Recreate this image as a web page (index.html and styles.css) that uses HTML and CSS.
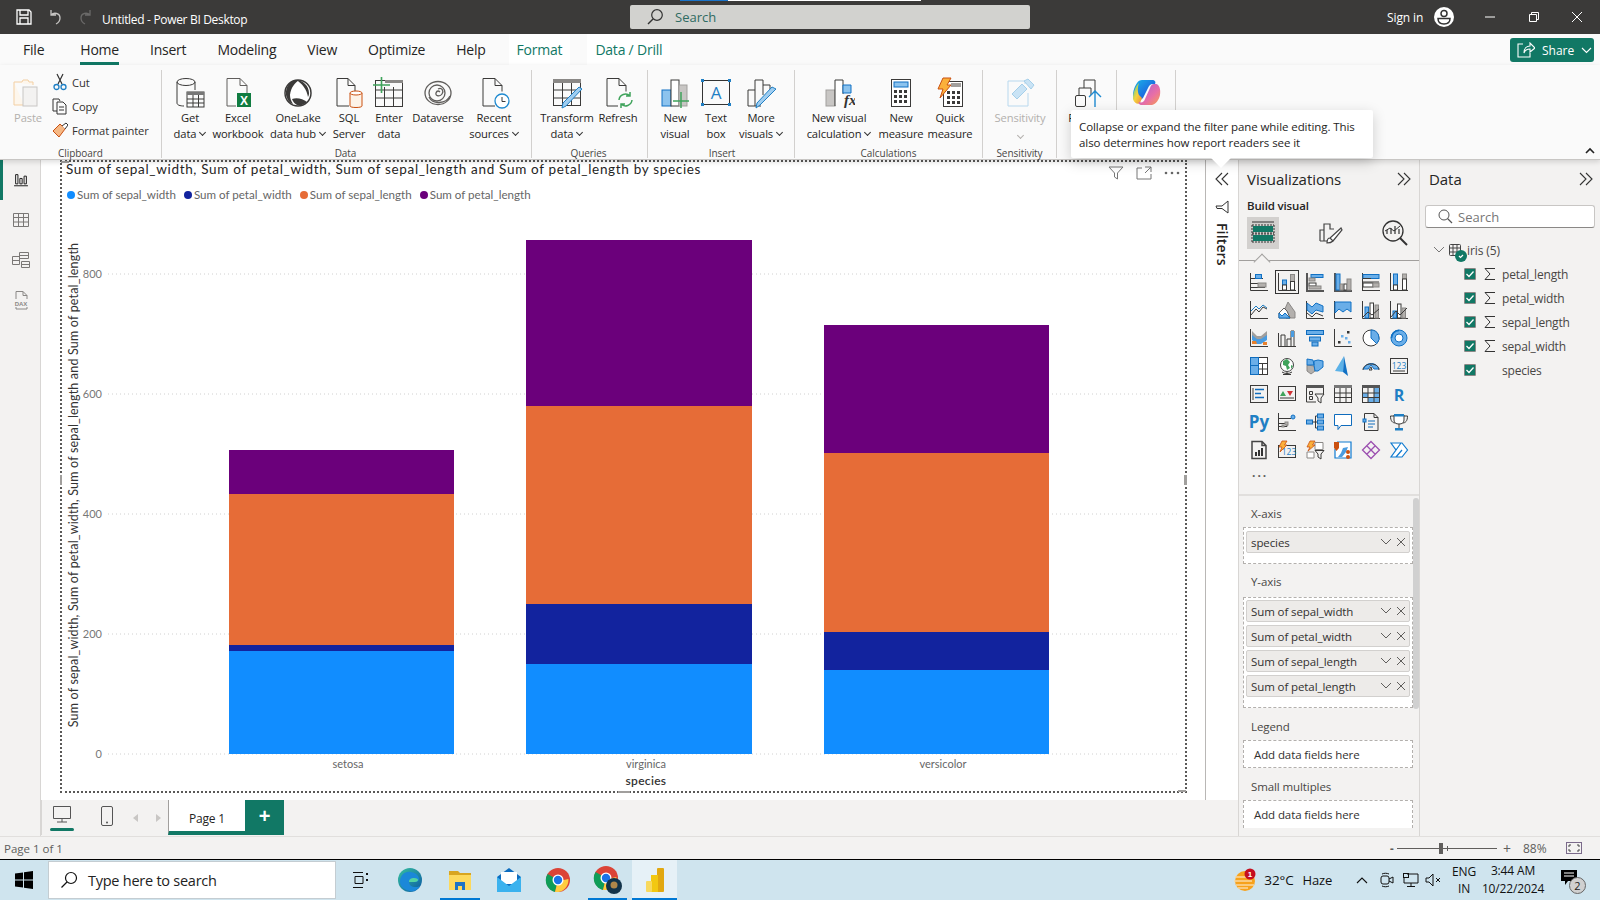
FILE: index.html
```html
<!DOCTYPE html>
<html lang="en">
<head>
<meta charset="utf-8">
<title>Untitled - Power BI Desktop</title>
<link rel="stylesheet" href="styles.css">
</head>
<body>
<div class="app">
  <header class="titlebar">
    <div class="tb-left">
      <svg class="tb-ic" width="18" height="18" viewBox="0 0 18 18"><path d="M2 2h12l2 2v12H2zM5 2v5h8V2M5 16v-6h8v6" fill="none" stroke="#fff" stroke-width="1.3"/></svg>
      <svg class="tb-ic" width="18" height="18" viewBox="0 0 18 18"><path d="M5 2v5h5M5 7c3-3 9-2 9 3 0 3-2 5-4 6" fill="none" stroke="#c8c6c4" stroke-width="1.3"/></svg>
      <svg class="tb-ic" width="18" height="18" viewBox="0 0 18 18"><path d="M13 2v5H8M13 7c-3-3-9-2-9 3 0 3 2 5 4 6" fill="none" stroke="#6b6a69" stroke-width="1.3"/></svg>
      <span class="tb-title">Untitled - Power BI Desktop</span>
    </div>
    <div class="tb-search">
      <i class="tb-stripe"></i>
      <svg width="18" height="18" viewBox="0 0 18 18"><circle cx="11" cy="7" r="5.3" fill="none" stroke="#333" stroke-width="1.2"/><path d="M7 11l-5 5" stroke="#333" stroke-width="1.4"/></svg>
      <span>Search</span>
    </div>
    <div class="tb-right">
      <span class="signin">Sign in</span>
      <svg width="22" height="22" viewBox="0 0 22 22"><circle cx="11" cy="11" r="10" fill="#fff"/><circle cx="11" cy="7.5" r="3" fill="none" stroke="#333" stroke-width="1.5"/><path d="M5 12.5h12c0 4-3 5.5-6 5.5s-6-1.5-6-5.5z" fill="none" stroke="#333" stroke-width="1.5"/></svg>
      <svg class="win-min" width="12" height="12" viewBox="0 0 12 12"><path d="M1 6h10" stroke="#fff"/></svg>
      <svg class="win-max" width="12" height="12" viewBox="0 0 12 12"><path d="M1.5 3.5h7v7h-7zM3.5 3.5v-2h7v7h-2" fill="none" stroke="#fff"/></svg>
      <svg class="win-close" width="12" height="12" viewBox="0 0 12 12"><path d="M1 1l10 10M11 1L1 11" stroke="#fff"/></svg>
    </div>
  </header>

  <nav class="tabs">
    <span class="tab tab-file">File</span>
    <span class="tab tab-on">Home</span>
    <span class="tab">Insert</span>
    <span class="tab">Modeling</span>
    <span class="tab">View</span>
    <span class="tab">Optimize</span>
    <span class="tab">Help</span>
    <span class="tab tab-ctx">Format</span>
    <span class="tab tab-ctx">Data / Drill</span>
    <button class="share">
      <svg width="18" height="16" viewBox="0 0 18 16"><path d="M6 2H1v13h12v-4M7 11c0-5 3-7 6-7V1l5 5-5 4V7c-3 0-5 1-6 4z" fill="none" stroke="#fff" stroke-width="1.1"/></svg>
      <span>Share</span>
      <svg width="11" height="7" viewBox="0 0 11 7"><path d="M1 1l4.500 4.500L10 1" fill="none" stroke="#fff" stroke-width="1.1"/></svg>
    </button>
  </nav>

  <section class="ribbon">
    <div class="group g-clip">
      <div class="items">
        <div class="item it-paste">
          <svg width="32" height="32" viewBox="0 0 32 32"><path d="M2 5h8l1-2h5l1 2h4v3M2 5v23h10" fill="#fdf6ec" stroke="#f3cfa3"/><rect x="11" y="10" width="14" height="19" fill="#f3f2f1" stroke="#c8c6c4"/></svg>
          <span class="lbl dim">Paste</span>
        </div>
        <div class="small-col">
          <div class="small"><svg width="16" height="18" viewBox="0 0 16 18"><path d="M5 1l5 10M11 1L6 11" stroke="#333" stroke-width="1.2"/><circle cx="4.5" cy="14" r="2.5" fill="none" stroke="#1f7fc4" stroke-width="1.3"/><circle cx="11.5" cy="14" r="2.5" fill="none" stroke="#1f7fc4" stroke-width="1.3"/></svg><span>Cut</span></div>
          <div class="small"><svg width="16" height="18" viewBox="0 0 16 18"><path d="M5 14H1V2h6l1 2M5 5h6l3 3v9H5z" fill="#fafafa" stroke="#333"/><path d="M7 10h5M7 13h5" stroke="#333"/></svg><span>Copy</span></div>
          <div class="small"><svg width="16" height="18" viewBox="0 0 16 18"><path d="M1 10l7-7 5 5-6 8z" fill="#f5b885" stroke="#ca5010"/><path d="M10 5l4-3 2 2-3 4" fill="#fff" stroke="#333"/></svg><span>Format painter</span></div>
        </div>
      </div>
      <div class="glabel">Clipboard</div>
    </div>

    <div class="group g-data">
      <div class="items">
        <div class="item w44">
          <svg width="32" height="32" viewBox="0 0 32 32"><path d="M3 5v21c0 2 3 3 7 3M21 5v8" fill="none" stroke="#3b3a39"/><ellipse cx="12" cy="5" rx="9" ry="3.5" fill="none" stroke="#3b3a39"/><rect x="13" y="15" width="17" height="15" fill="#fafafa" stroke="#3b3a39"/><rect x="13" y="15" width="17" height="3" fill="#777"/><path d="M19 18v12M24.500 18v12M13 22h17M13 26h17" stroke="#3b3a39"/></svg>
          <span class="lbl">Get<br>data<i class="car"></i></span>
        </div>
        <div class="item w52">
          <svg width="32" height="32" viewBox="0 0 32 32"><path d="M5 1.500h13l7 7V16M5 1.500V29h9M18 1.500v7h7" fill="none" stroke="#605e5c"/><rect x="15" y="16" width="14" height="14" fill="#107c41"/><text x="22" y="27.500" class="xl">X</text></svg>
          <span class="lbl">Excel<br>workbook</span>
        </div>
        <div class="item w68">
          <svg width="32" height="32" viewBox="0 0 32 32"><circle cx="16" cy="16" r="13" fill="#fff" stroke="#3b3a39" stroke-width="1.5"/><path d="M4 18C3 8 10 2 17 3c-4 3-8 7-9 15 0 3 1 6 3 9-4-1-6-5-7-9z" fill="#3b3a39"/><path d="M14 3c7 0 13 6 13 13 0 1 0 2-1 4-1-7-6-14-12-17z" fill="#3b3a39"/><path d="M10 22c5-2 11 0 15 3-3 3-7 4-10 3-2-1-4-3-5-6z" fill="#3b3a39"/></svg>
          <span class="lbl">OneLake<br>data hub<i class="car"></i></span>
        </div>
        <div class="item w34">
          <svg width="32" height="32" viewBox="0 0 32 32"><path d="M4 1.500h11l7 7V14M4 1.500V29h12M15 1.500v7h7" fill="none" stroke="#3b3a39"/><path d="M17 16v13c0 2 12 2 12 0V16" fill="#fdf3e8" stroke="#ca5010"/><ellipse cx="23" cy="16" rx="6" ry="2" fill="#fff" stroke="#ca5010"/></svg>
          <span class="lbl">SQL<br>Server</span>
        </div>
        <div class="item w46">
          <svg width="32" height="32" viewBox="0 0 32 32"><rect x="2.500" y="3.500" width="27" height="26" fill="none" stroke="#3b3a39"/><rect x="12" y="3" width="18" height="3" fill="#8a8886"/><path d="M11.500 10v20M20.500 10v20M3 13h27M3 21h27" stroke="#3b3a39"/><path d="M8.500 0v16M0 8h17" stroke="#3fa35b" stroke-width="1.600"/></svg>
          <span class="lbl">Enter<br>data</span>
        </div>
        <div class="item w52">
          <svg width="32" height="32" viewBox="0 0 32 32"><g fill="none" stroke="#605e5c" stroke-width="1.300"><ellipse cx="16" cy="16" rx="13" ry="11.500"/><circle cx="15" cy="16" r="8"/><path d="M16 12c4-2 6 2 4 5s-7 2-6-1 3-2 4-1M7 20c4 8 17 7 21-1"/></g></svg>
          <span class="lbl">Dataverse</span>
        </div>
        <div class="item w60">
          <svg width="32" height="32" viewBox="0 0 32 32"><path d="M5 1.500h12l7 7v6M5 1.500V29h12M17 1.500v7h7" fill="none" stroke="#3b3a39"/><circle cx="24" cy="24" r="7" fill="#fff" stroke="#1f8ad0" stroke-width="1.300"/><path d="M24 20v4.500h3.500" fill="none" stroke="#3b3a39"/></svg>
          <span class="lbl">Recent<br>sources<i class="car"></i></span>
        </div>
      </div>
      <div class="glabel">Data</div>
    </div>

    <div class="group g-query">
      <div class="items">
        <div class="item w58">
          <svg width="32" height="32" viewBox="0 0 32 32"><rect x="2.500" y="2.500" width="27" height="26" fill="none" stroke="#3b3a39"/><rect x="2" y="2" width="28" height="4" fill="#8a8886"/><path d="M11.500 6v23M20.500 6v23M3 13h27M3 21h27" stroke="#3b3a39"/><path d="M31 12l-16 17-4 2 1-5 16-16z" fill="#9fcdf0" stroke="#1f7fc4"/></svg>
          <span class="lbl">Transform<br>data<i class="car"></i></span>
        </div>
        <div class="item w44">
          <svg width="32" height="32" viewBox="0 0 32 32"><path d="M5 1.500h12l7 7v6M5 1.500V29h11M17 1.500v7h7" fill="none" stroke="#3b3a39"/><path d="M17 23a6.500 6.500 0 0 1 11-4M30 23a6.500 6.500 0 0 1-11 4M28 15v4h-4M19 31v-4h4" fill="none" stroke="#3fa35b" stroke-width="1.500"/></svg>
          <span class="lbl">Refresh</span>
        </div>
      </div>
      <div class="glabel">Queries</div>
    </div>

    <div class="group g-insert">
      <div class="items">
        <div class="item w42">
          <svg width="32" height="32" viewBox="0 0 32 32"><rect x="3" y="13" width="9" height="16" fill="#8cc3ee" stroke="#1171c4"/><rect x="12" y="3" width="8" height="26" fill="#fff" stroke="#3b3a39"/><rect x="20" y="8" width="8" height="21" fill="#c8c6c4" stroke="#a19f9d"/><path d="M22 15v16M14 24h16" stroke="#3fa35b" stroke-width="1.500"/></svg>
          <span class="lbl">New<br>visual</span>
        </div>
        <div class="item w40">
          <svg width="32" height="32" viewBox="0 0 32 32"><rect x="2.500" y="3.500" width="27" height="24" fill="#fafafa" stroke="#333"/><g fill="#1f7fc4"><rect x="1" y="2" width="3" height="3"/><rect x="28" y="2" width="3" height="3"/><rect x="1" y="26" width="3" height="3"/><rect x="28" y="26" width="3" height="3"/></g><text x="16" y="22" class="txa">A</text></svg>
          <span class="lbl">Text<br>box</span>
        </div>
        <div class="item w50">
          <svg width="32" height="32" viewBox="0 0 32 32"><path d="M3 29V13h7v16zM10 13V3h8v15M18 8h7v5" fill="none" stroke="#3b3a39"/><path d="M10 29h6" stroke="#3b3a39"/><path d="M31 12L15 28l-4 3 1-5 15-16z" fill="#9fcdf0" stroke="#1f7fc4"/></svg>
          <span class="lbl">More<br>visuals<i class="car"></i></span>
        </div>
      </div>
      <div class="glabel">Insert</div>
    </div>

    <div class="group g-calc">
      <div class="items">
        <div class="item w74">
          <svg width="32" height="32" viewBox="0 0 32 32"><rect x="3" y="13" width="9" height="16" fill="#c8c6c4" stroke="#a19f9d"/><path d="M12 29V3h8v14" fill="#fff" stroke="#3b3a39"/><path d="M20 8h8v8h-8z" fill="#8cc3ee" stroke="#1171c4"/><text x="21" y="28" class="fx">fx</text></svg>
          <span class="lbl">New visual<br>calculation<i class="car"></i></span>
        </div>
        <div class="item w50">
          <svg width="32" height="32" viewBox="0 0 32 32"><rect x="6.500" y="2.500" width="19" height="27" fill="#fff" stroke="#3b3a39"/><rect x="9" y="5" width="14" height="5" fill="#8cc3ee" stroke="#1171c4"/><g fill="#3b3a39"><rect x="9" y="13" width="3" height="3"/><rect x="14" y="13" width="3" height="3"/><rect x="19" y="13" width="3" height="3"/><rect x="9" y="18" width="3" height="3"/><rect x="14" y="18" width="3" height="3"/><rect x="19" y="18" width="3" height="3"/><rect x="9" y="23" width="3" height="3"/><rect x="14" y="23" width="3" height="3"/><rect x="19" y="23" width="3" height="3"/></g></svg>
          <span class="lbl">New<br>measure</span>
        </div>
        <div class="item w48">
          <svg width="32" height="32" viewBox="0 0 32 32"><rect x="9.500" y="4.500" width="19" height="25" fill="#fff" stroke="#3b3a39"/><rect x="17" y="6" width="10" height="4" fill="#a19f9d"/><g fill="#3b3a39"><rect x="13" y="14" width="3" height="3"/><rect x="18" y="14" width="3" height="3"/><rect x="23" y="14" width="3" height="3"/><rect x="13" y="19" width="3" height="3"/><rect x="18" y="19" width="3" height="3"/><rect x="23" y="19" width="3" height="3"/><rect x="13" y="24" width="3" height="3"/><rect x="18" y="24" width="3" height="3"/><rect x="23" y="24" width="3" height="3"/></g><path d="M9 1h8l-4 7h4L6 21l3-9H4z" fill="#fbb03b" stroke="#ca5010"/></svg>
          <span class="lbl">Quick<br>measure</span>
        </div>
      </div>
      <div class="glabel">Calculations</div>
    </div>

    <div class="group g-sens">
      <div class="items">
        <div class="item w74">
          <svg width="32" height="32" viewBox="0 0 32 32"><path d="M4 4h17v3M4 4v25h20V16" fill="none" stroke="#b8d8ee"/><path d="M8 17L18 7l5 5-10 10zM20 4l4-2 6 6-3 4z" fill="#c9e3f5" stroke="#a6cfe9"/></svg>
          <span class="lbl dim">Sensitivity<br><i class="car dimcar"></i></span>
        </div>
      </div>
      <div class="glabel">Sensitivity</div>
    </div>

    <div class="group g-pub">
      <div class="items">
        <div class="item w60">
          <svg class="ic-pub" width="32" height="32" viewBox="0 0 32 32"><rect x="2.500" y="18.500" width="10" height="11" rx="1.500" fill="#fafafa" stroke="#3b3a39"/><path d="M6 18v-7h12v7M11 11V3h11v12" fill="none" stroke="#3b3a39"/><path d="M22 30V14M16 20l6-6 6 6" fill="none" stroke="#1f8ad0" stroke-width="1.400"/></svg>
          <span class="lbl">Publish</span>
        </div>
      </div>
    </div>

    <div class="group g-cop">
      <div class="items">
        <div class="item w58">
          <svg width="32" height="32" viewBox="0 0 32 32"><defs><linearGradient id="cp1" x1="0" y1="0" x2="1" y2="1"><stop offset="0" stop-color="#19b5e8"/><stop offset=".6" stop-color="#1b6fe0"/><stop offset="1" stop-color="#3a4fd6"/></linearGradient><linearGradient id="cp2" x1="0" y1="0" x2="1" y2="1"><stop offset="0" stop-color="#a35fd8"/><stop offset=".6" stop-color="#e86fa6"/><stop offset="1" stop-color="#f9a04d"/></linearGradient><linearGradient id="cp3" x1="0" y1="0" x2="1" y2="1"><stop offset="0" stop-color="#3fd0a0"/><stop offset=".5" stop-color="#f5d33f"/><stop offset="1" stop-color="#f08a3c"/></linearGradient></defs><path d="M12 3h10c3 0 4 2 3 4l-2 0c-3 0-4 2-5 4l-5 10c-2 3-8 2-9 0-2-4 0-11 3-15 1-2 3-3 5-3z" fill="url(#cp1)"/><path d="M3 22c0-6 2-12 6-16-1 3-2 8 0 12l3 3-2 5c-2 2-6 0-7-4z" fill="url(#cp3)"/><path d="M24 7h2c3 0 5 5 4 11-1 5-4 9-8 10H12c-3 0-4-2-3-3 3 1 5 0 6-3l5-11c1-3 2-4 4-4z" fill="url(#cp2)"/></svg>
        </div>
      </div>
    </div>
    <svg class="rb-collapse" width="10" height="7" viewBox="0 0 10 7"><path d="M1 6l4-4 4 4" fill="none" stroke="#222" stroke-width="1.600"/></svg>
  </section>

  <main class="main">
    <aside class="rail">
      <span class="rail-on"></span>
      <svg width="20" height="20" viewBox="-3 -3 26 26"><path d="M1 17.500h18" stroke="#222" stroke-width="1.300"/><path d="M3 15V3h3v12zM8.500 15V8h3v7zM14 15V5h3v10z" fill="none" stroke="#222" stroke-width="1.300"/></svg>
      <svg width="20" height="20" viewBox="0 0 20 20"><path d="M2.500 3.500h15v13h-15zM2.500 7.500h15M2.500 12h15M7.500 3.500v13M12.500 3.500v13" fill="none" stroke="#7a7876"/></svg>
      <svg width="20" height="20" viewBox="0 0 20 20"><path d="M1.500 6.500h7v8h-7zM1.500 10.500h7M8.500 2.500h9v6h-9zM8.500 5.500h9M10.500 11.500h8v6h-8zM10.500 14.500h8" fill="none" stroke="#7a7876"/></svg>
      <svg width="20" height="20" viewBox="0 0 20 20"><path d="M5 9V1.500h7l4 4V9M12 1.500v4h4M5 17v2h11v-2" fill="none" stroke="#8a8886"/><text x="10" y="15.500" class="dax">DAX</text></svg>
    </aside>

    <div class="work">
      <div class="work-top">
        <div class="canvas">
          <div class="visual">
            <i class="hdl hdl-tl"></i><i class="hdl hdl-l"></i><i class="hdl hdl-r"></i><i class="hdl hdl-t"></i><i class="hdl hdl-b"></i><i class="hdl hdl-br"></i>
            <div class="v-title">Sum of sepal_width, Sum of petal_width, Sum of sepal_length and Sum of petal_length by species</div>
            <div class="v-tools">
              <svg width="16" height="14" viewBox="0 0 16 14"><path d="M1 1h14L9.500 7v6L6.500 11V7z" fill="none" stroke="#777"/></svg>
              <svg width="16" height="14" viewBox="0 0 16 14"><path d="M6 2H1v11h14V8M9 1h6v5M15 1L9 7" fill="none" stroke="#777"/></svg>
              <svg width="16" height="14" viewBox="0 0 16 14"><g fill="#666"><circle cx="2" cy="7" r="1.300"/><circle cx="8" cy="7" r="1.300"/><circle cx="14" cy="7" r="1.300"/></g></svg>
            </div>
            <div class="legend">
              <span class="lg"><i class="dot c1"></i>Sum of sepal_width</span>
              <span class="lg"><i class="dot c2"></i>Sum of petal_width</span>
              <span class="lg"><i class="dot c3"></i>Sum of sepal_length</span>
              <span class="lg"><i class="dot c4"></i>Sum of petal_length</span>
            </div>
            <svg class="plot" width="1124" height="586" viewBox="61 205 1124 586">
              <g class="grid"><path d="M108 274H1180M108 394H1180M108 514H1180M108 634H1180M108 754H1180"/></g>
              <g class="ylab"><text x="102" y="278">800</text><text x="102" y="398">600</text><text x="102" y="518">400</text><text x="102" y="638">200</text><text x="102" y="758">0</text></g>
              <rect class="c1f" x="229" y="651" width="225" height="103"/><rect class="c2f" x="229" y="645" width="225" height="6"/><rect class="c3f" x="229" y="494" width="225" height="151"/><rect class="c4f" x="229" y="450" width="225" height="44"/>
              <rect class="c1f" x="526" y="664" width="226" height="90"/><rect class="c2f" x="526" y="604" width="226" height="60"/><rect class="c3f" x="526" y="406" width="226" height="198"/><rect class="c4f" x="526" y="240" width="226" height="166"/>
              <rect class="c1f" x="824" y="670" width="225" height="84"/><rect class="c2f" x="824" y="632" width="225" height="38"/><rect class="c3f" x="824" y="453" width="225" height="179"/><rect class="c4f" x="824" y="325" width="225" height="128"/>
              <g class="xlab"><text x="348" y="768">setosa</text><text x="646" y="768">virginica</text><text x="943" y="768">versicolor</text></g>
              <text class="xtitle" x="646" y="785">species</text>
              <text class="ytitle" transform="translate(78 485) rotate(-90)">Sum of sepal_width, Sum of petal_width, Sum of sepal_length and Sum of petal_length</text>
            </svg>
          </div>
        </div>
        <div class="filters">
          <svg width="14" height="14" viewBox="0 0 14 14"><path d="M7 1L1 7l6 6M13 1L7 7l6 6" fill="none" stroke="#333" stroke-width="1.100"/></svg>
          <svg class="f-ic" width="14" height="14" viewBox="0 0 14 14"><path d="M13 1v12L7 8.500H2L1 6h6z" fill="none" stroke="#333"/></svg>
          <span class="f-text">Filters</span>
        </div>
      </div>
      <div class="pagebar">
        <div class="pb-view">
          <svg width="20" height="20" viewBox="0 0 20 20"><path d="M1.500 2.500h17v12h-17zM10 15v3M5 18h10" fill="none" stroke="#555"/></svg>
          <i></i>
        </div>
        <svg class="pb-phone" width="14" height="22" viewBox="0 0 14 22"><rect x="1.500" y="1.500" width="11" height="19" rx="1.500" fill="none" stroke="#555"/><circle cx="7" cy="17.500" r="1" fill="#555"/></svg>
        <svg class="pb-arr" width="8" height="10" viewBox="0 0 8 10"><path d="M6 1v8L1 5z" fill="#c8c6c4"/></svg>
        <svg class="pb-arr2" width="8" height="10" viewBox="0 0 8 10"><path d="M2 1v8l5-4z" fill="#c8c6c4"/></svg>
        <div class="page-tab">Page 1</div>
        <div class="page-add">+</div>
      </div>
    </div>

    <section class="viz">
      <div class="pane-head"><span>Visualizations</span><svg width="14" height="14" viewBox="0 0 14 14"><path d="M1 1l6 6-6 6M7 1l6 6-6 6" fill="none" stroke="#333" stroke-width="1.100"/></svg></div>
      <div class="build">Build visual</div>
      <div class="build-tabs">
        <div class="bt bt-on"><svg width="28" height="24" viewBox="0 0 28 24"><path d="M3 1h22" stroke="#333"/><rect x="4" y="5" width="20" height="6" fill="#117865"/><rect x="4" y="14" width="20" height="6" fill="#117865"/><path d="M3 4h22M3 12h22M3 13h22M3 21h22M3 4v17M25 4v17" fill="none" stroke="#333" stroke-dasharray="2 1"/></svg></div>
        <div class="bt"><svg width="26" height="26" viewBox="0 0 26 26"><path d="M3 21V10h4V4h6v5h4M7 10v11M3 21h8" fill="none" stroke="#444" stroke-width="1.200"/><path d="M24 8L13 18l3 3L25 10zM13 18c-2 0-3 2-3 5 3 0 5-1 6-2" fill="#fff" stroke="#444" stroke-width="1.200"/></svg></div>
        <div class="bt"><svg width="26" height="26" viewBox="0 0 26 26"><circle cx="11" cy="11" r="10" fill="none" stroke="#333" stroke-width="1.300"/><path d="M5 14V10M9 14V8M13 14V6M17 14V9" stroke="#333" stroke-width="1.200"/><path d="M3 11l5-3 4 3 6-5" fill="none" stroke="#333"/><path d="M18 18l7 7" stroke="#333" stroke-width="2"/></svg></div>
      </div>
      <div class="notch-line"><i></i></div>

      <div class="vi-grid">
        <!-- row 1 -->
        <svg class="vi" viewBox="0 0 18 18"><path class="k" d="M.5 0v17.500H18M1 5.500h12M1 10.500h7M1 14.500h14"/><rect class="b" x="5.500" y="1.500" width="6" height="4"/><rect class="g" x="8" y="10" width="8" height="4"/></svg>
        <div class="vi-sel"><svg class="vi" viewBox="0 0 18 18"><path class="k" d="M.5 0v17.500H18"/><rect class="b" x="4.500" y="7" width="4" height="5"/><rect class="w" x="4.500" y="12" width="4" height="5"/><rect class="g" x="12.500" y="1.500" width="4" height="7"/><rect class="w" x="12.500" y="8.500" width="4" height="8.500"/></svg></div>
        <svg class="vi" viewBox="0 0 18 18"><path class="kk" d="M1 0v18h17"/><rect class="b" x="5" y="1.500" width="12" height="3"/><rect class="g" x="3" y="5" width="6" height="3"/><rect class="w" x="3" y="10" width="7" height="3"/><rect class="g" x="3" y="13" width="12" height="3"/></svg>
        <svg class="vi" viewBox="0 0 18 18"><path class="kk" d="M1 0v18h17"/><rect class="b" x="2" y="1" width="4" height="16"/><rect class="g" x="6" y="11" width="3" height="6"/><rect class="w" x="10" y="11" width="3" height="6"/><rect class="g" x="13" y="6" width="4" height="11"/></svg>
        <svg class="vi" viewBox="0 0 18 18"><path class="k" d="M.5 0v18M0 17.500h18"/><rect class="b" x="1" y="1.500" width="16" height="4"/><path class="k" d="M1 5.500h8M1 9h16"/><rect class="w" x="1" y="10" width="10" height="4"/><rect class="g" x="11" y="10" width="6" height="4"/></svg>
        <svg class="vi" viewBox="0 0 18 18"><path class="k" d="M.5 18V0M0 17.500h18"/><rect class="b" x="3.500" y="1" width="4" height="11"/><rect class="w" x="3.500" y="12" width="4" height="5"/><rect class="g" x="12.500" y="1" width="4" height="5"/><rect class="w" x="12.500" y="6" width="4" height="11"/></svg>
        <!-- row 2 -->
        <svg class="vi" viewBox="0 0 18 18"><path class="k" d="M.5 0v17.500H18M1 14l5-6 3 3 4-5 4 2"/><path class="s" d="M1 10l5-5 3 3 4-4 4 3"/></svg>
        <svg class="vi" viewBox="0 0 18 18"><path class="g" d="M6 10l4-9 7 10v6H8z"/><path class="w4" d="M1 12l5-5 3 3 3 7H1z"/><path class="b" d="M1 17v-5l3 3 3-3 5 5z"/></svg>
        <svg class="vi" viewBox="0 0 18 18"><path class="k" d="M.5 0v17.500H18"/><path class="b" d="M1 2l5 4 4-4 7 3v6l-7-2-4 4-5-4z"/><path class="k" d="M1 12l5 4 4-4 7 3"/></svg>
        <svg class="vi" viewBox="0 0 18 18"><path class="k" d="M.5 0v17.500H18"/><path class="b" d="M1 1h16v10l-4-3-4 3-4-3-4 4z"/></svg>
        <svg class="vi" viewBox="0 0 18 18"><path class="k" d="M.5 0v17.500H18"/><rect class="b" x="3" y="6" width="3.500" height="11"/><rect class="w" x="8" y="2" width="3.500" height="15"/><rect class="g" x="13" y="4" width="3.500" height="13"/><path class="k" d="M1 16l5-5 4 3 7-6"/></svg>
        <svg class="vi" viewBox="0 0 18 18"><path class="k" d="M.5 0v17.500H18"/><rect class="b" x="3" y="10" width="3.500" height="7"/><rect class="w" x="7.500" y="3" width="3.500" height="14"/><rect class="g" x="12" y="7" width="3.500" height="10"/><path class="k" d="M1 16l5-6 4 4 7-7"/></svg>
        <!-- row 3 -->
        <svg class="vi" viewBox="0 0 18 18"><path class="k" d="M.5 0v17.500H18"/><path class="fg" d="M2 2l5 5h4l6-5v5l-6 5H7L2 7z"/><path class="fb" d="M2 6l5 4h4l6-4v5l-6 4H7l-5-4z"/><path class="fo" d="M2 12h4l1 3H2zM13 13h4v3h-4z"/></svg>
        <svg class="vi" viewBox="0 0 18 18"><path class="k" d="M.5 4v13.500H18M3 17V6h4v11M9 17V10h4v7M13 10V2h3v15"/><path class="fb" d="M13 2h3v6h-3z"/></svg>
        <svg class="vi" viewBox="0 0 18 18"><rect class="fbs" x="0.500" y="1.500" width="17" height="4"/><rect class="fbs" x="3.500" y="8" width="11" height="4"/><rect class="fbs" x="6" y="13" width="6" height="4"/></svg>
        <svg class="vi" viewBox="0 0 18 18"><path class="k" d="M.5 0v17.500H18"/><g class="dk"><rect x="13" y="2" width="2.500" height="2.500"/><rect x="4" y="12" width="2.500" height="2.500"/></g><g class="lb"><rect x="7" y="6" width="2.500" height="2.500"/><rect x="11" y="8" width="2.500" height="2.500"/><rect x="14" y="12" width="2.500" height="2.500"/></g></svg>
        <svg class="vi" viewBox="0 0 18 18"><circle class="w2" cx="9" cy="9" r="8"/><path class="b" d="M9 1a8 8 0 0 1 5.700 13.700L9 9z"/></svg>
        <svg class="vi" viewBox="0 0 18 18"><circle class="b" cx="9" cy="9" r="8"/><circle class="dnh" cx="9" cy="9" r="4"/><path class="dn2" d="M1.500 9a7.500 7.500 0 0 1 7.500-7.500"/></svg>
        <!-- row 4 -->
        <svg class="vi" viewBox="0 0 18 18"><rect class="w" x=".5" y=".5" width="17" height="17"/><rect class="fbs" x=".5" y=".5" width="8" height="8"/><rect class="fbs" x=".5" y="8.500" width="8" height="9"/><path class="k" d="M9 6.500h8M12.500 6.500v11M9 12h8"/></svg>
        <svg class="vi" viewBox="0 0 18 18"><circle cx="9" cy="8" r="6.500" fill="#fff" stroke="#444"/><path d="M5 4l4-2 3 3-2 3 2 3-3 2-1-4-3-1zM13 8l2 1-2 3z" fill="#3fa35b"/><path class="k" d="M4 15c3 2 7 2 10 0M9 15v2M5 17.500h8"/></svg>
        <svg class="vi" viewBox="0 0 18 18"><path class="g" d="M1 8l7 1 1 5-4 3-4-3z"/><path class="b" d="M1 2l6 1 1 5-7 0zM8 4l4-1 5 1v6l-5 4-3 0-1-6z"/></svg>
        <svg class="vi" viewBox="0 0 18 18"><path d="M10 -1L1 14l8 1z" fill="#5cb2e8"/><path d="M10 -1l-1 16 5 4z" fill="#1171c4"/></svg>
        <svg class="vi" viewBox="0 0 18 18"><path class="b" d="M3 10C4 6 14 4 17 12h-5L9 8 6 12H1z"/><path class="k" d="M1 13c0-8 16-8 16 0M7 13l2-3 1 3z"/></svg>
        <svg class="vi" viewBox="0 0 18 18"><rect class="k" x=".5" y="1.500" width="17" height="15"/><path class="k" d="M3 14h12"/><text x="9" y="12" class="n123">123</text></svg>
        <!-- row 5 -->
        <svg class="vi" viewBox="0 0 18 18"><rect class="k" x=".5" y=".5" width="17" height="17"/><path class="k" d="M3 3v12"/><path class="bl" d="M5 4.500h9M5 8.500h6M5 12.500h9"/></svg>
        <svg class="vi" viewBox="0 0 18 18"><rect class="k" x=".5" y="1.500" width="17" height="14"/><path d="M2 11l3-5 3 5z" fill="#3fa35b"/><path d="M9 6h6l-3 5z" fill="#d13438"/><path class="k" d="M2 13h14"/></svg>
        <svg class="vi" viewBox="0 0 18 18"><path class="k" d="M10 17H.5V.5h17V10"/><rect x="0" y="0" width="18" height="3" fill="#555"/><path class="k" d="M3.500 6.500h3v3h-3zM3.500 11.500h3v3h-3z"/><path class="w3" d="M9 9h9l-3 4v5l-3-2v-3z"/></svg>
        <svg class="vi" viewBox="0 0 18 18"><rect class="k" x=".5" y=".5" width="17" height="17"/><rect x="0" y="0" width="18" height="3" fill="#777"/><path class="k" d="M6 3v14M12 3v14M1 8h16M1 12.500h16"/></svg>
        <svg class="vi" viewBox="0 0 18 18"><rect class="k" x=".5" y=".5" width="17" height="17"/><rect x="0" y="0" width="18" height="3" fill="#555"/><rect x="1" y="8" width="5" height="4" fill="#6aaee8"/><rect x="6" y="12" width="6" height="5" fill="#6aaee8"/><rect x="12" y="3" width="5" height="14" fill="#6aaee8"/><path class="k" d="M6 3v14M12 3v14M1 8h16M1 12.500h16"/></svg>
        <svg class="vi" viewBox="0 0 18 18"><text x="9" y="16" class="rt">R</text></svg>
        <!-- row 6 -->
        <svg class="vi" viewBox="0 0 18 18"><text x="9" y="15" class="py">Py</text></svg>
        <svg class="vi" viewBox="0 0 18 18"><path class="k" d="M.5 0v17.500H18M1 5.500h12M1 10.500h7M9 10.500v3h-8"/><circle class="b" cx="15" cy="4" r="2"/><rect class="g" x="7" y="9" width="3" height="3"/><rect class="g" x="4" y="12" width="2" height="2"/></svg>
        <svg class="vi" viewBox="0 0 18 18"><rect class="fbs" x=".5" y="7" width="6" height="4"/><path class="k" d="M6.500 9h3M9.500 3v12M9.500 3H11M9.500 9H11M9.500 15H11"/><rect class="fbs" x="11.500" y="1" width="6" height="4"/><rect class="fbs" x="11.500" y="7" width="6" height="4"/><rect class="fbs" x="11.500" y="13" width="6" height="4"/></svg>
        <svg class="vi" viewBox="0 0 18 18"><path class="sb" d="M.5 1.500h17v11H7l-3 4v-4H.5z"/></svg>
        <svg class="vi" viewBox="0 0 18 18"><path class="k" d="M2.500.5H12l4 4v13H2.500zM12 .5v4h4"/><rect class="b" x="1" y="6" width="3" height="3"/><path class="bl2" d="M6 8h7M6 11h7M6 14h5"/></svg>
        <svg class="vi" viewBox="0 0 18 18"><path class="k" d="M4 3H.5c0 5 2 7 5 7M14 3h3.500c0 5-2 7-5 7M9 11v4"/><path class="w2" d="M4 2h10v5c0 3-2 4-5 4s-5-1-5-4z"/><rect x="4" y="1" width="10" height="2.500" fill="#1f7fc4"/><rect x="5" y="15" width="8" height="2.500" fill="#1f7fc4"/></svg>
        <!-- row 7 -->
        <svg class="vi" viewBox="0 0 18 18"><path class="dkk" d="M2 .5h10l4 4v13H2zM12 .5v4h4"/><rect x="5" y="11" width="2" height="4" fill="#333"/><rect x="8" y="9" width="2" height="6" fill="#333"/><rect x="11" y="7" width="2" height="8" fill="#333"/></svg>
        <svg class="vi" viewBox="0 0 18 18"><rect class="k" x=".5" y="4.500" width="17" height="12"/><text x="11" y="14" class="n123s">123</text><path class="lt" d="M4 0h5L6.500 4H9L2 11l2-5H1z"/></svg>
        <svg class="vi" viewBox="0 0 18 18"><path class="g2" d="M9 1.500h8v7H9zM1 11h7v6H1z"/><path class="lt" d="M4 0h5L6.500 4H9L2 10l2-4H1z"/><path class="w3" d="M9 9.500h9l-3 3.500v5l-3-2v-3z"/></svg>
        <svg class="vi" viewBox="0 0 18 18"><path class="sb2" d="M3 1h14v16H1V8"/><path class="fb" d="M4 16l3-4 2-5 5-1-2 5-4 5z"/><path d="M0 1h5v6l-2.500 3L0 7z" fill="#ca5010"/><circle cx="14" cy="11" r="2" fill="#ca5010"/><circle cx="14" cy="16" r="2" fill="#ca5010"/></svg>
        <svg class="vi" viewBox="0 0 18 18"><path class="pa" d="M9 .5L17.500 9 9 17.500.5 9zM5 5l4 4 4-4M5 13l4-4 4 4"/></svg>
        <svg class="vi" viewBox="0 0 18 18"><path class="sb2" d="M1 2h11l5.500 7L12 16H1l5-7zM6 9l5-7M6 16l6-7"/></svg>
      </div>
      <div class="vi-more">...</div>
      <div class="vsep"></div>

      <div class="wells">
        <i class="scroll"></i>
        <div class="w-label">X-axis</div>
        <div class="well well-x">
          <div class="pill"><span>species</span><svg width="12" height="8" viewBox="0 0 12 8"><path d="M1 1l5 5 5-5" fill="none" stroke="#605e5c"/></svg><svg width="8" height="8" viewBox="0 0 8 8"><path d="M0 0l8 8M8 0L0 8" stroke="#605e5c"/></svg></div>
        </div>
        <div class="w-label w-y">Y-axis</div>
        <div class="well well-y">
          <div class="pill"><span>Sum of sepal_width</span><svg width="12" height="8" viewBox="0 0 12 8"><path d="M1 1l5 5 5-5" fill="none" stroke="#605e5c"/></svg><svg width="8" height="8" viewBox="0 0 8 8"><path d="M0 0l8 8M8 0L0 8" stroke="#605e5c"/></svg></div>
          <div class="pill"><span>Sum of petal_width</span><svg width="12" height="8" viewBox="0 0 12 8"><path d="M1 1l5 5 5-5" fill="none" stroke="#605e5c"/></svg><svg width="8" height="8" viewBox="0 0 8 8"><path d="M0 0l8 8M8 0L0 8" stroke="#605e5c"/></svg></div>
          <div class="pill"><span>Sum of sepal_length</span><svg width="12" height="8" viewBox="0 0 12 8"><path d="M1 1l5 5 5-5" fill="none" stroke="#605e5c"/></svg><svg width="8" height="8" viewBox="0 0 8 8"><path d="M0 0l8 8M8 0L0 8" stroke="#605e5c"/></svg></div>
          <div class="pill"><span>Sum of petal_length</span><svg width="12" height="8" viewBox="0 0 12 8"><path d="M1 1l5 5 5-5" fill="none" stroke="#605e5c"/></svg><svg width="8" height="8" viewBox="0 0 8 8"><path d="M0 0l8 8M8 0L0 8" stroke="#605e5c"/></svg></div>
        </div>
        <div class="w-label w-leg">Legend</div>
        <div class="well well-add">Add data fields here</div>
        <div class="w-label w-sm">Small multiples</div>
        <div class="well well-add well-last">Add data fields here</div>
      </div>
    </section>

    <section class="data">
      <div class="pane-head"><span>Data</span><svg width="14" height="14" viewBox="0 0 14 14"><path d="M1 1l6 6-6 6M7 1l6 6-6 6" fill="none" stroke="#333" stroke-width="1.100"/></svg></div>
      <div class="d-search">
        <svg width="15" height="15" viewBox="0 0 15 15"><circle cx="6" cy="6" r="5" fill="none" stroke="#555"/><path d="M9.500 9.500L14 14" stroke="#555" stroke-width="1.200"/></svg>
        <span>Search</span>
      </div>
      <div class="d-table">
        <svg class="d-chev" width="12" height="8" viewBox="0 0 12 8"><path d="M1 1l5 5 5-5" fill="none" stroke="#777"/></svg>
        <span class="d-tic">
          <svg width="12" height="12" viewBox="0 0 12 12"><rect x=".5" y=".5" width="11" height="11" rx="1" fill="none" stroke="#444"/><path d="M4 .5v11M8 .5v11M.5 4h11M.5 8h11" stroke="#444"/></svg>
          <i class="d-ok"><svg width="10" height="10" viewBox="0 0 10 10"><path d="M3 5l1.500 1.500L7 4" fill="none" stroke="#fff" stroke-width="1.200"/></svg></i>
        </span>
        <span class="d-name">iris (5)</span>
      </div>
      <div class="field"><i class="cb"><svg width="12" height="12" viewBox="0 0 12 12"><path d="M2.500 6l2.500 2.500L9.500 3.500" fill="none" stroke="#fff" stroke-width="1.300"/></svg></i><svg class="sig" width="18" height="14" viewBox="0 0 18 14"><path d="M11 1.500H1L6 7l-5 5.500h10" fill="none" stroke="#333"/></svg><span>petal_length</span></div>
      <div class="field"><i class="cb"><svg width="12" height="12" viewBox="0 0 12 12"><path d="M2.500 6l2.500 2.500L9.500 3.500" fill="none" stroke="#fff" stroke-width="1.300"/></svg></i><svg class="sig" width="18" height="14" viewBox="0 0 18 14"><path d="M11 1.500H1L6 7l-5 5.500h10" fill="none" stroke="#333"/></svg><span>petal_width</span></div>
      <div class="field"><i class="cb"><svg width="12" height="12" viewBox="0 0 12 12"><path d="M2.500 6l2.500 2.500L9.500 3.500" fill="none" stroke="#fff" stroke-width="1.300"/></svg></i><svg class="sig" width="18" height="14" viewBox="0 0 18 14"><path d="M11 1.500H1L6 7l-5 5.500h10" fill="none" stroke="#333"/></svg><span>sepal_length</span></div>
      <div class="field"><i class="cb"><svg width="12" height="12" viewBox="0 0 12 12"><path d="M2.500 6l2.500 2.500L9.500 3.500" fill="none" stroke="#fff" stroke-width="1.300"/></svg></i><svg class="sig" width="18" height="14" viewBox="0 0 18 14"><path d="M11 1.500H1L6 7l-5 5.500h10" fill="none" stroke="#333"/></svg><span>sepal_width</span></div>
      <div class="field"><i class="cb"><svg width="12" height="12" viewBox="0 0 12 12"><path d="M2.500 6l2.500 2.500L9.500 3.500" fill="none" stroke="#fff" stroke-width="1.300"/></svg></i><span class="sig-gap"></span><span>species</span></div>
    </section>
  </main>

  <footer class="status">
    <span class="st-page">Page 1 of 1</span>
    <div class="zoomer">
      <span class="z-minus">-</span>
      <span class="z-track"><i class="z-thumb"></i><i class="z-tick"></i></span>
      <span class="z-plus">+</span>
      <span class="z-pct">88%</span>
      <svg width="16" height="12" viewBox="0 0 16 12"><rect x=".5" y=".5" width="15" height="11" fill="none" stroke="#7a6a8a"/><path d="M3 5V3h2M11 3h2v2M3 7v2h2M13 7v2h-2" fill="none" stroke="#444"/></svg>
    </div>
  </footer>

  <footer class="taskbar">
    <div class="tk-start"><svg width="18" height="18" viewBox="0 0 18 18"><path d="M0 2.500l8-1v7H0zM9 1.300L18 0v8.500H9zM0 9.500h8v7l-8-1zM9 9.500h9V18l-9-1.300z" fill="#000"/></svg></div>
    <div class="tk-search">
      <svg width="18" height="18" viewBox="0 0 18 18"><circle cx="11" cy="7" r="5.500" fill="none" stroke="#111" stroke-width="1.200"/><path d="M7 11l-5.500 5.500" stroke="#111" stroke-width="1.300"/></svg>
      <span>Type here to search</span>
    </div>
    <div class="tk-apps">
      <div class="tk-app tk-task"><svg width="16" height="16" viewBox="0 0 16 16"><path d="M0 .5h10M0 15.500h10M2 4.500h8v7H2z" fill="none" stroke="#111"/><rect x="13" y="1" width="2" height="2" fill="#111"/><rect x="13" y="7" width="2" height="2" fill="#111"/></svg></div>
      <div class="tk-app tk-edge"><svg width="26" height="26" viewBox="0 0 26 26"><defs><linearGradient id="ed" x1="0" y1="0" x2="1" y2="1"><stop offset="0" stop-color="#37c1a0"/><stop offset="1" stop-color="#0c59a4"/></linearGradient></defs><circle cx="13" cy="13" r="12" fill="url(#ed)"/><path d="M3 15C3 8 8 4 14 5c5 1 8 4 8 7 0 2-2 3-4 3h-6c0 3 3 5 6 5 2 0 3 0 5-1-2 3-5 6-10 5-5-1-10-4-10-9z" fill="#1b88d8"/><path d="M12 15c0-3 2-4 5-4s4 1 4 2-2 2-3 2z" fill="#53d2a2"/></svg></div>
      <div class="tk-app tk-files tk-under"><svg width="24" height="24" viewBox="0 0 24 24"><path d="M1 3h9l2 2h11v4H1z" fill="#d8a520"/><rect x="1" y="7" width="22" height="15" fill="#fdd95c"/><path d="M7 22v-8h10v8h-3v-4h-4v4z" fill="#1d74c5"/></svg></div>
      <div class="tk-app tk-mail"><svg width="26" height="26" viewBox="0 0 26 26"><path d="M1 10L13 1l12 9v14H1z" fill="#0c6cbf"/><rect x="5" y="5" width="16" height="12" fill="#fff"/><path d="M1 10l12 9 12-9v15H1z" fill="#3bb2ee"/></svg></div>
      <div class="tk-app tk-chrome"><svg width="26" height="26" viewBox="0 0 26 26"><circle cx="13" cy="13" r="12" fill="#db4437"/><path d="M13 13L2.600 7A12 12 0 0 0 10 25z" fill="#0f9d58"/><path d="M13 13l6 0 4.400-1A12 12 0 0 1 10 25z" fill="#ffcd40"/><circle cx="13" cy="13" r="5.500" fill="#fff"/><circle cx="13" cy="13" r="4.200" fill="#1a73e8"/></svg></div>
      <div class="tk-app tk-chrome2 tk-under"><svg width="30" height="30" viewBox="0 0 30 30"><circle cx="13" cy="13" r="12" fill="#db4437"/><path d="M13 13L2.600 7A12 12 0 0 0 10 25z" fill="#0f9d58"/><path d="M13 13l6 0 4.400-1A12 12 0 0 1 10 25z" fill="#ffcd40"/><circle cx="13" cy="13" r="5.500" fill="#fff"/><circle cx="13" cy="13" r="4.200" fill="#1a73e8"/><circle cx="21" cy="21" r="8" fill="#12334a"/><circle cx="21" cy="20" r="3.500" fill="#b0874a"/></svg></div>
      <div class="tk-app tk-pbi tk-active"><svg width="20" height="26" viewBox="0 0 20 26"><rect x="12" y="1" width="7" height="24" rx="1" fill="#e2a811"/><rect x="6" y="8" width="7" height="17" fill="#f2c811"/><rect x="1" y="14" width="6" height="11" rx="1" fill="#f8d95e"/></svg></div>
    </div>
    <div class="tray">
      <svg class="tr-weather" width="26" height="24" viewBox="0 0 26 24"><circle cx="13" cy="13" r="10" fill="#f7a21c"/><path d="M3 9h16M2 13h18M4 17h18M6 20h10" stroke="#fbd9a0" stroke-width="1.500"/><circle cx="18" cy="6" r="5.500" fill="#c50f1f"/><text x="18" y="9" class="wbadge">1</text></svg>
      <span class="tr-temp">32°C</span>
      <span class="tr-haze">Haze</span>
      <svg class="tr-chev" width="12" height="7" viewBox="0 0 12 7"><path d="M1 6l5-5 5 5" fill="none" stroke="#111" stroke-width="1.100"/></svg>
      <svg class="tr-i1" width="14" height="16" viewBox="0 0 14 16"><rect x="1" y="4" width="8" height="8" rx="2" fill="none" stroke="#111"/><path d="M9 7l4-2v6l-4-2M2 2c2-1 5-1 7 0M2 14c2 1 5 1 7 0" fill="none" stroke="#111"/></svg>
      <svg class="tr-i2" width="17" height="16" viewBox="0 0 17 16"><path d="M5 2h11v9H2V6M9 11v3M5 14.500h8" fill="none" stroke="#111"/><rect x="1.500" y="1.500" width="5" height="4" fill="none" stroke="#111"/></svg>
      <svg class="tr-i3" width="16" height="14" viewBox="0 0 16 14"><path d="M1 5h3l4-4v12L4 9H1zM11 5l4 4M15 5l-4 4" fill="none" stroke="#111"/></svg>
      <div class="tr-lang"><span>ENG</span><span>IN</span></div>
      <div class="tr-clock"><span>3:44 AM</span><span>10/22/2024</span></div>
      <div class="tr-notif">
        <svg width="18" height="16" viewBox="0 0 18 16"><path d="M0 0h16v11H7l-3 4v-4H0z" fill="#000"/><path d="M3 3h10M3 6h10" stroke="#fff"/></svg>
        <i class="tr-count">2</i>
      </div>
    </div>
  </footer>

  <div class="tooltip">Collapse or expand the filter pane while editing. This also determines how report readers see it<i class="tip-arrow"></i></div>
</div>
</body>
</html>
```
FILE: styles.css
```css
*{box-sizing:border-box}
html,body{margin:0;padding:0;height:900px;overflow:hidden}
body{font-family:"Open Sans","Noto Sans",sans-serif;color:#252423;font-size:12px}
i{font-style:normal}
svg{display:block;flex:none}
.app{position:relative;width:1600px;height:900px;display:flex;flex-direction:column;background:#f3f2f1}

/* title bar */
.titlebar{height:34px;background:#3b3a39;display:flex;align-items:center;color:#fff;flex:none}
.tb-left{flex:0 0 630px;display:flex;align-items:center;padding-left:15px;gap:13px}
.tb-title{font-size:12px;margin:5px 0 0 -6px;letter-spacing:-.32px}
.tb-search{position:relative;width:400px;height:24px;background:#d2d2cf;border-radius:2px;display:flex;align-items:center;padding-left:16px;gap:11px;font-size:13px;color:#2f6b62}
.tb-stripe{position:absolute;left:50px;top:-5px;width:241px;height:1px;background:linear-gradient(90deg,#1a73c8 0,#1a73c8 20%,#fff 20%)}
.tb-right{flex:1;display:flex;align-items:center;padding-left:357px}
.signin{font-size:12px;width:46px;white-space:nowrap;letter-spacing:-.1px}
.win-min{margin-left:29px}
.win-max{margin-left:32px}
.win-close{margin-left:31px}

/* tabs */
.tabs{height:31px;background:#fafafa;display:flex;align-items:flex-start;padding-left:23px;gap:31px;flex:none;position:relative;font-size:14px}
.tab{height:31px;line-height:31px;position:relative;letter-spacing:-.22px;color:#252423;white-space:nowrap}
.tab-file{margin-right:5px}
.tab-on{font-weight:500}
.tab-on::after{content:"";position:absolute;left:0;right:0;bottom:0;height:3px;background:#117865}
.tab-ctx{color:#117865;font-weight:500;background:#fff;box-shadow:0 0 0 8px #fff;clip-path:inset(0 -12px 0 -12px)}
.tab-ctx:last-of-type{margin-left:2px}
.share{position:absolute;left:1510px;top:4px;width:84px;height:24px;background:#117865;border:0;border-radius:3px;color:#fff;display:flex;align-items:center;gap:7px;padding:0 0 0 7px;font:12px "Open Sans",sans-serif}

/* ribbon */
.ribbon{height:95px;background:#fafafa;display:flex;padding-top:5px;flex:none;position:relative;z-index:3;border-bottom:1px solid #c8c6c4;box-shadow:0 2px 5px rgba(0,0,0,.14)}
.group{height:88px;display:flex;flex-direction:column;border-right:1px solid #d2d0ce;flex:none}
.items{height:77px;display:flex;padding-top:7px}
.glabel{height:11px;line-height:13px;text-align:center;font-size:10px;color:#484644;letter-spacing:-.05px}
.g-clip{width:162px}
.g-data{width:370px;padding-left:6px}
.g-data .glabel{margin-left:-8px}
.g-query{width:116px;padding-left:6px}
.g-query .glabel{margin-left:-8px}
.g-insert{width:147px;padding-left:6px}
.g-insert .glabel{margin-left:-4px}
.g-calc{width:188px;padding-left:7px}
.g-calc .glabel{margin-left:-7px}
.g-sens{width:74px}
.g-pub{width:60px}
.g-cop{width:59px}
.item{display:flex;flex-direction:column;align-items:center;flex:none}
.item svg{margin-bottom:1px;height:32px}
.ic-pub{margin-left:3px}
.w34{width:34px}.w40{width:40px}.w42{width:42px}.w44{width:44px}.w46{width:46px}.w48{width:48px}.w50{width:50px}.w52{width:52px}.w58{width:58px}.w60{width:60px}.w68{width:68px}.w74{width:74px}
.lbl{display:block;text-align:center;font-size:11.2px;line-height:16px;white-space:nowrap;letter-spacing:-.12px;color:#252423}
.dim{color:#b3b0ad}
.car{display:inline-block;width:5px;height:5px;border-right:1px solid #333;border-bottom:1px solid #333;transform:rotate(45deg);margin:0 1px 3px 4px}
.dimcar{border-color:#b3b0ad;margin:0}
.it-paste{width:56px}
.small-col{display:flex;flex-direction:column;gap:6px;margin-top:-4px;margin-left:-4px}
.small{display:flex;align-items:center;gap:4px;height:18px;font-size:11.2px;letter-spacing:-.1px;color:#323130;white-space:nowrap}
.rb-collapse{position:absolute;left:1585px;top:82px}
.xl{font:700 12px "Liberation Sans",sans-serif;fill:#fff;text-anchor:middle}
.txa{font:17px "Open Sans",sans-serif;fill:#1f7fc4;text-anchor:middle}
.fx{font:italic 700 15px "Liberation Serif",serif;fill:#333}

/* main */
.main{flex:1;display:flex;min-height:0}
.rail{width:41px;flex:none;background:#f3f2f1;border-right:1px solid #d8d6d4;position:relative;display:flex;flex-direction:column;align-items:center;gap:20px;padding:10px 0 0 1px}
.rail-on{position:absolute;left:0;top:0;width:3px;height:40px;background:#117865}
.dax{font:700 6px "Liberation Sans",sans-serif;fill:#8a8886;text-anchor:middle}
.work{width:1197px;flex:none;display:flex;flex-direction:column}
.work-top{height:640px;display:flex;background:#fff}
.canvas{width:1165px;flex:none;padding-left:19px;border-right:1px solid #b9b7b5}
.visual{position:relative;width:1127px;height:633px;border:2px dotted #5a5958}
.hdl{position:absolute;background:#a19f9d}
.hdl-tl{left:-1px;top:-1px;width:8px;height:2px}
.hdl-l{left:-2px;top:313px;width:2px;height:10px}
.hdl-r{right:-2px;top:313px;width:3px;height:10px}
.hdl-t{left:557px;top:-2px;width:12px;height:2px}
.hdl-b{left:556px;bottom:-2px;width:12px;height:2px}
.hdl-br{right:-1px;bottom:-1px;width:8px;height:2px}
.v-title{position:absolute;left:4px;top:-2px;font:13.5px/18px Lato,Roboto,sans-serif;letter-spacing:.68px;color:#252423;white-space:nowrap}
.v-tools{position:absolute;left:1046px;top:4px;display:flex;gap:12px}
.legend{position:absolute;left:5px;top:25px;display:flex;gap:8px;font:11.6px/16px Lato,sans-serif;color:#666;white-space:nowrap}
.lg{display:flex;align-items:center;gap:2px}
.dot{width:8px;height:8px;border-radius:50%}
.c1{background:#118dff}.c2{background:#12239e}.c3{background:#e66c37}.c4{background:#6b007b}
.c1f{fill:#118dff}.c2f{fill:#12239e}.c3f{fill:#e66c37}.c4f{fill:#6b007b}
.plot{position:absolute;left:-1px;top:43px}
.grid path{stroke:#d0d0d0;stroke-dasharray:1 3;fill:none}
.ylab text{font:11px Lato,sans-serif;fill:#777;text-anchor:end}
.xlab text{font:11px Lato,sans-serif;fill:#666;text-anchor:middle}
.xtitle{font:600 12px Lato,sans-serif;fill:#333;text-anchor:middle;letter-spacing:.3px}
.ytitle{font:12.5px Lato,sans-serif;fill:#333;text-anchor:middle;letter-spacing:.18px}
.filters{flex:1;background:#fff;display:flex;flex-direction:column;align-items:center;padding-top:12px;position:relative}
.f-ic{margin-top:14px}
.f-text{writing-mode:vertical-rl;font-size:14px;font-weight:600;margin-top:9px;letter-spacing:.15px;color:#252423}
.pagebar{height:35px;background:#f3f2f1;display:flex;position:relative;box-shadow:inset 1px 0 0 #d8d6d4}
.pb-view{width:24px;margin-left:9px;padding-top:4px;display:flex;flex-direction:column;align-items:center;position:relative}
.pb-view i{display:block;width:24px;height:3px;background:#117865;border-radius:2px;margin-top:4px}
.pb-phone{margin:5px 0 0 26px}
.pb-arr{margin:13px 0 0 18px}
.pb-arr2{margin:13px 0 0 14px}
.page-tab{width:77px;margin-left:6px;background:#fff;border-left:1px solid #a19f9d;border-bottom:4px solid #117865;text-align:center;padding-top:2px;line-height:34px;height:35px;overflow:hidden;font-size:12px;font-weight:500;color:#252423;letter-spacing:-.2px}
.page-add{width:39px;background:#117865;color:#fff;text-align:center;font:700 20px/33px "Liberation Sans",sans-serif}

/* viz pane */
.viz{width:182px;flex:none;border-left:1px solid #d8d6d4;border-right:1px solid #d8d6d4;position:relative;background:#f3f2f1;display:flex;flex-direction:column}
.pane-head{height:36px;display:flex;align-items:center;justify-content:space-between;padding:1px 8px 0 8px;font-size:15px;font-weight:500;color:#252423;letter-spacing:-.05px;flex:none}
.build{font-size:11.5px;font-weight:600;padding-left:8px;height:21px;line-height:20px;letter-spacing:-.15px;flex:none}
.build-tabs{display:flex;padding-left:8px;height:32px;flex:none}
.bt{width:32px;height:32px;display:flex;align-items:center;justify-content:center}
.bt-on{background:#d2d0ce}
.bt:nth-child(2){margin-left:35px}
.bt:nth-child(3){margin-left:33px}
.notch-line{height:12px;position:relative;border-bottom:1px solid #a19f9d;flex:none}
.notch-line i{position:absolute;left:17px;top:7px;width:12px;height:12px;transform:rotate(45deg);background:#f3f2f1;border-left:1px solid #a19f9d;border-top:1px solid #a19f9d}
.vi-grid{display:grid;grid-template-columns:repeat(6,28px);grid-auto-rows:28px;padding:7px 0 0 6px;align-items:center;justify-items:center;flex:none}
.vi{width:18px;height:18px;overflow:visible}
.vi-sel{width:24px;height:24px;border:1px solid #333;display:flex;align-items:center;justify-content:center}
.vi-more{font:700 12px/10px "Open Sans",sans-serif;letter-spacing:2px;padding:4px 0 0 13px;color:#605e5c;height:30px;flex:none}
.vsep{height:2px;background:#e1dfdd;flex:none}
.k{fill:none;stroke:#3b3a39;stroke-width:1}
.kk{fill:none;stroke:#555;stroke-width:2}
.b{fill:#6aaee8;stroke:#1171c4;stroke-width:1}
.g{fill:#b3b0ad;stroke:#8a8886;stroke-width:1}
.w{fill:#fff;stroke:#3b3a39;stroke-width:1}
.w4{fill:#fff;stroke:#3b3a39;stroke-width:.8}
.s{fill:none;stroke:#1f7fc4;stroke-width:1}
.fg{fill:#a19f9d}
.fb{fill:#4a9ce0}
.fo{fill:#e8812c}
.fbs{fill:#6aaee8;stroke:#0f6cbd;stroke-width:1}
.dk{fill:#333}
.lb{fill:#6aaee8}
.w2{fill:#fff;stroke:#3b3a39;stroke-width:1}
.w3{fill:#f3f2f1;stroke:#3b3a39;stroke-width:1}
.dnh{fill:#fff;stroke:#1171c4;stroke-width:1}
.dn2{fill:none;stroke:#1171c4;stroke-width:1.5}
.bl{fill:none;stroke:#0f6cbd;stroke-width:1.5}
.bl2{fill:none;stroke:#0f6cbd;stroke-width:1}
.sb{fill:#fff;stroke:#0f6cbd;stroke-width:1}
.sb2{fill:#fff;stroke:#0f7ad0;stroke-width:1.2}
.pa{fill:none;stroke:#9b4fb0;stroke-width:1.3}
.g2{fill:#fff;stroke:#8a8886;stroke-width:1}
.dkk{fill:#f3f2f1;stroke:#444;stroke-width:1.5}
.lt{fill:#fbb03b;stroke:#ca5010;stroke-width:.8}
.n123{font:8.5px "Open Sans",sans-serif;fill:#1f7fc4;text-anchor:middle}
.n123s{font:8.5px "Open Sans",sans-serif;fill:#1f7fc4;text-anchor:middle}
.rt{font:700 16px "Open Sans",sans-serif;fill:#1f7fc4;text-anchor:middle}
.py{font:700 17px "Open Sans",sans-serif;fill:#1f7fc4;text-anchor:middle}

.wells{position:relative;flex:1;padding:9px 0 0 4px;overflow:hidden;min-height:0;font-size:11.5px}
.scroll{position:absolute;right:0;top:2px;width:6px;height:211px;background:#d0d0d0;border-radius:3px}
.w-label{height:18px;line-height:18px;padding-left:8px;color:#484644;letter-spacing:-.1px}
.well{width:170px;background:#fff;border:1px dashed #b3b0ad;margin-top:4px}
.well-x{height:37px;padding:3px 2px}
.well-y{height:111px;padding:2px 2px;display:flex;flex-direction:column;gap:3px;margin-top:6px}
.w-y{margin-top:9px}
.w-leg{margin-top:10px}
.w-sm{margin-top:10px}
.pill{height:22px;width:164px;background:#edebe9;border:1px solid #d2d0ce;border-radius:2px;display:flex;align-items:center;padding:0 4px 0 4px;gap:5px;color:#323130;letter-spacing:-.1px}
.pill span{flex:1;white-space:nowrap}
.well-add{height:28px;line-height:27px;padding-left:10px;color:#323130;letter-spacing:-.1px}
.well-last{border-bottom:0}

/* data pane */
.data{flex:1;background:#f3f2f1;display:flex;flex-direction:column}
.data .pane-head{padding-left:9px;padding-right:7px}
.d-search{margin:9px 5px 0 5px;height:23px;background:#fff;border:1px solid #c8c6c4;border-bottom-color:#8a8886;border-radius:3px;display:flex;align-items:center;gap:5px;padding-left:12px;font-size:13px;color:#777;flex:none}
.d-table{display:flex;align-items:center;height:24px;margin-top:10px;padding-left:13px;font-size:12px;flex:none;color:#484644}
.d-chev{margin-right:4px}
.d-tic{position:relative;width:12px;height:12px}
.d-ok{position:absolute;left:6px;top:6px;width:12px;height:12px;border-radius:50%;background:#117865;display:flex;align-items:center;justify-content:center}
.d-name{margin-left:6px;letter-spacing:-.1px}
.field{display:flex;align-items:center;height:24px;padding-left:44px;font-size:12px;color:#484644;letter-spacing:-.2px;flex:none}
.cb{width:12px;height:12px;background:#117865;border:1px solid #8a8886;border-radius:1px;display:flex;align-items:center;justify-content:center;margin-right:8px}
.sig,.sig-gap{width:18px;flex:none}
.sig-gap{display:block}

/* status */
.status{height:24px;flex:none;background:#f3f2f1;border-top:1px solid #e1dfdd;border-bottom:1px solid #000;display:flex;align-items:center;justify-content:space-between;font-size:11.5px;color:#605e5c;padding-left:4px}
.zoomer{display:flex;align-items:center;padding-right:18px}
.z-minus{font-weight:700;width:7px}
.z-track{position:relative;display:block;width:100px;height:1px;background:#605e5c}
.z-thumb{position:absolute;left:42px;top:-5px;width:4px;height:11px;background:#605e5c}
.z-tick{position:absolute;left:50px;top:-2px;width:1px;height:5px;background:#605e5c}
.z-plus{font-size:14px;margin-left:6px;width:20px}
.z-pct{width:43px;font-size:12px}

/* taskbar */
.taskbar{height:40px;flex:none;background:#cfe4ee;display:flex;align-items:center;position:relative}
.tk-start{width:48px;display:flex;justify-content:center}
.tk-search{width:288px;height:38px;background:#fff;border:1px solid #c4cdd2;display:flex;align-items:center;gap:10px;padding-left:11px;font-size:14.5px;color:#222;letter-spacing:-.25px}
.tk-apps{display:flex;align-items:center;height:40px}
.tk-app{height:40px;display:flex;align-items:center;justify-content:center;position:relative}
.tk-task{width:49px}
.tk-edge{width:49px}
.tk-files{width:48px;margin-left:2px}
.tk-mail{width:49px}
.tk-chrome{width:49px}
.tk-chrome2{width:47px;margin-left:2px}
.tk-pbi{width:45px;margin-left:1px}
.tk-under::after{content:"";position:absolute;left:4px;right:4px;bottom:0;height:2px;background:#0078d4}
.tk-active{background:#e6f1f7}
.tk-active::after{content:"";position:absolute;left:0;right:0;bottom:0;height:2px;background:#0078d4}
.tray{margin-left:auto;display:flex;align-items:center;height:40px;color:#111;font-size:13px;white-space:nowrap}
.tr-weather{margin-right:6px}
.wbadge{font:700 8px "Liberation Sans",sans-serif;fill:#fff;text-anchor:middle}
.tr-temp{font-size:13.5px;margin-right:9px;letter-spacing:-.1px}
.tr-haze{font-size:13px;margin-right:24px;letter-spacing:-.2px}
.tr-chev{margin-right:12px}
.tr-i1{margin-right:8px}
.tr-i2{margin-right:6px}
.tr-i3{margin-right:11px}
.tr-lang{display:flex;flex-direction:column;align-items:center;font-size:12px;line-height:17px;width:24px;margin-right:6px;letter-spacing:-.1px}
.tr-clock{display:flex;flex-direction:column;align-items:center;font-size:12px;line-height:18px;width:62px;letter-spacing:-.15px}
.tr-notif{position:relative;width:36px;margin-left:17px;margin-right:3px;height:30px;padding:5px 0 0 0}
.tr-count{position:absolute;left:8px;top:12px;width:17px;height:17px;border-radius:50%;border:1px solid #666;background:#d0d0d0;text-align:center;font:11px/15px "Open Sans",sans-serif;color:#222}

/* tooltip */
.tooltip{position:absolute;left:1071px;top:110px;width:302px;height:48px;background:#fff;border-radius:2px;box-shadow:0 4px 14px rgba(0,0,0,.18);padding:9px 8px 0 8px;font-size:11.5px;line-height:16px;color:#252423;z-index:5;letter-spacing:-.08px}
.tip-arrow{position:absolute;left:143px;top:41px;width:14px;height:14px;background:#fff;transform:rotate(45deg);z-index:-1}
```
